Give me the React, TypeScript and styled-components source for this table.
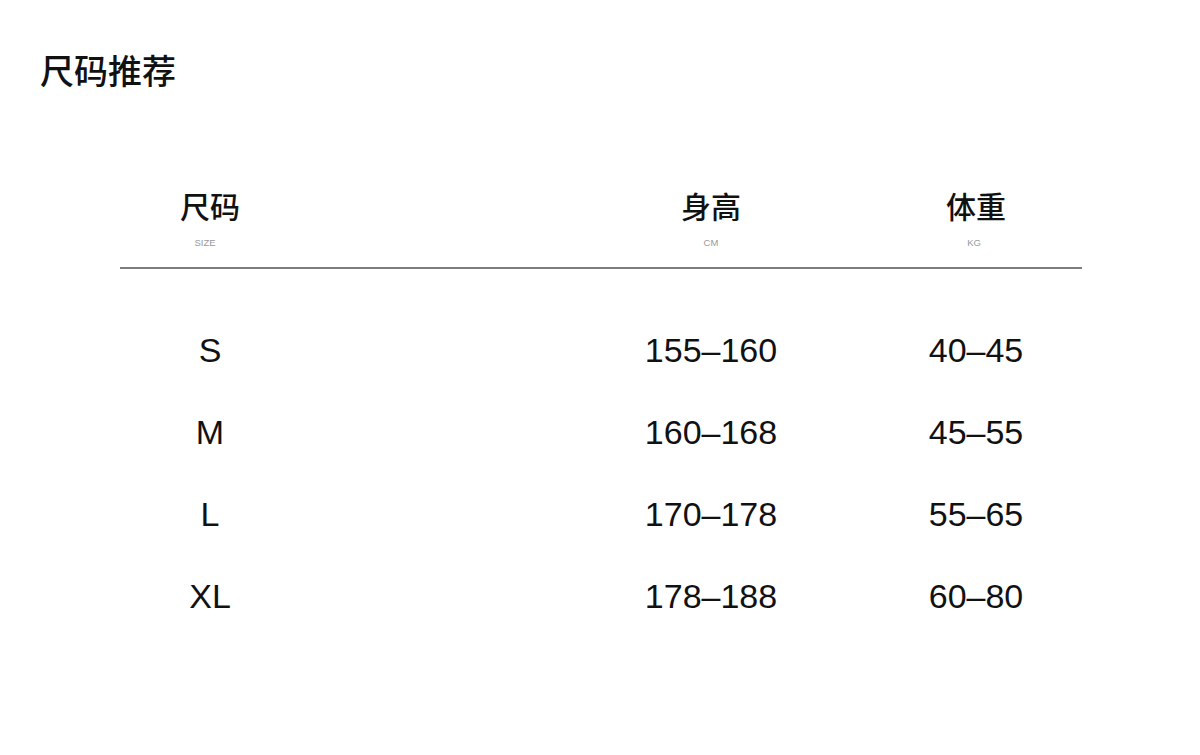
import React from 'react';
import styled, { createGlobalStyle } from 'styled-components';

const GlobalStyle = createGlobalStyle`
  html, body {
    margin: 0;
    padding: 0;
    background: #ffffff;
  }
  body {
    font-family: 'Liberation Sans', 'Noto Sans CJK SC', sans-serif;
    color: #111111;
  }
`;

const columns = [
  { title: '尺码', unit: 'SIZE', shift: -5 },
  { title: '身高', unit: 'CM', shift: 0 },
  { title: '体重', unit: 'KG', shift: -2 },
];

const rows = [
  ['S', '155–160', '40–45'],
  ['M', '160–168', '45–55'],
  ['L', '170–178', '55–65'],
  ['XL', '178–188', '60–80'],
];

const App = () => {
  return (
    <Page>
      <GlobalStyle />
      <Title>尺码推荐</Title>
      <Table>
        <HeaderRow>
          {columns.map((col, i) => (
            <HeadCell key={col.unit} $col={i === 0 ? 1 : i + 2}>
              <HeadTitle>{col.title}</HeadTitle>
              <HeadUnit $shift={col.shift}>{col.unit}</HeadUnit>
            </HeadCell>
          ))}
        </HeaderRow>
        <Body>
          {rows.map((row) => (
            <Row key={row[0]}>
              {row.map((value, i) => (
                <Cell key={i} $col={i === 0 ? 1 : i + 2}>
                  {value}
                </Cell>
              ))}
            </Row>
          ))}
        </Body>
      </Table>
    </Page>
  );
};

export default App;

const Page = styled.div`
  width: 1200px;
  height: 755px;
  padding: 53px 0 0 0;
  box-sizing: border-box;
  overflow: hidden;
`;

const Title = styled.h1`
  margin: 0 0 0 40px;
  font-family: 'Noto Sans CJK SC', sans-serif;
  font-size: 34px;
  line-height: 34px;
  font-weight: 500;
  color: #111111;
`;

const Table = styled.div`
  width: 962px;
  margin: 103px 0 0 120px;
`;

const grid = `
  display: grid;
  grid-template-columns: 180px 181px 200px 200px;
  column-gap: 65px;
  padding-right: 6px;
`;

const HeaderRow = styled.div`
  ${grid}
  padding-bottom: 19px;
  border-bottom: 2px solid #7d7d7d;
`;

const HeadCell = styled.div<{ $col: number }>`
  grid-column: ${(p) => p.$col};
  display: flex;
  flex-direction: column;
  align-items: center;
`;

const HeadTitle = styled.div`
  font-family: 'Noto Sans CJK SC', sans-serif;
  font-size: 30px;
  line-height: 30px;
  font-weight: 500;
  color: #111111;
`;

const HeadUnit = styled.div<{ $shift: number }>`
  margin-top: 18px;
  margin-left: ${(p) => p.$shift * 2}px;
  font-family: 'Liberation Sans', sans-serif;
  font-size: 9.5px;
  line-height: 10px;
  color: #9a9a9a;
`;

const Body = styled.div`
  margin-top: 40px;
`;

const Row = styled.div`
  ${grid}
  height: 82px;
  align-items: center;
`;

const Cell = styled.div<{ $col: number }>`
  grid-column: ${(p) => p.$col};
  text-align: center;
  font-family: 'Liberation Sans', sans-serif;
  font-size: 34px;
  line-height: 82px;
  color: #111111;
`;
